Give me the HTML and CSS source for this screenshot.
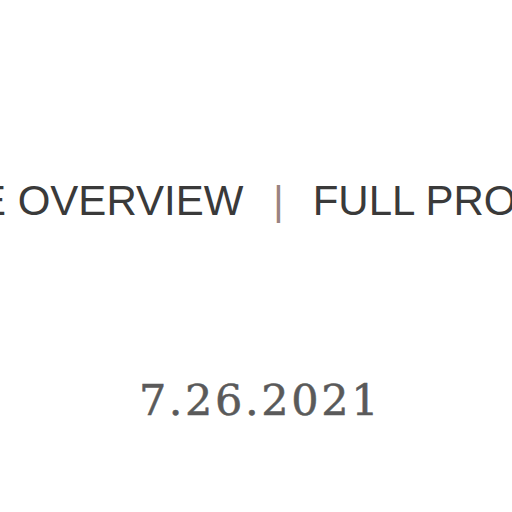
FILE: index.html
```html
<!DOCTYPE html>
<html>
<head>
<meta charset="utf-8">
<link rel="stylesheet" href="styles.css">
</head>
<body>
<div class="page">
  <nav class="nav">
    <span class="nav-item first">E OVERVIEW</span>
    <span class="sep">|</span>
    <span class="nav-item">FULL PROFILE</span>
  </nav>
  <div class="date">7.26.2021</div>
</div>
</body>
</html>
```
FILE: styles.css
```css
html, body {
  margin: 0;
  padding: 0;
  background: #ffffff;
  overflow: hidden;
}
.page {
  width: 512px;
  height: 512px;
  overflow: hidden;
  display: flex;
  flex-direction: column;
}
.nav {
  display: flex;
  align-items: baseline;
  white-space: nowrap;
  margin-top: 177px;
  margin-left: -22px;
  font-family: "Liberation Sans", Arial, sans-serif;
  font-size: 42px;
  line-height: 48px;
  color: #3a3a3a;
}
.sep {
  color: #9a8380;
  font-size: 40px;
  margin: 0 29px 0 30px;
}
.date {
  margin-top: 150px;
  text-align: center;
  font-family: "DejaVu Serif", Georgia, serif;
  font-size: 43px;
  letter-spacing: 2.6px;
  color: #5a5a5a;
  -webkit-text-stroke: 0.5px #5a5a5a;
  padding-left: 8px;
}
```
